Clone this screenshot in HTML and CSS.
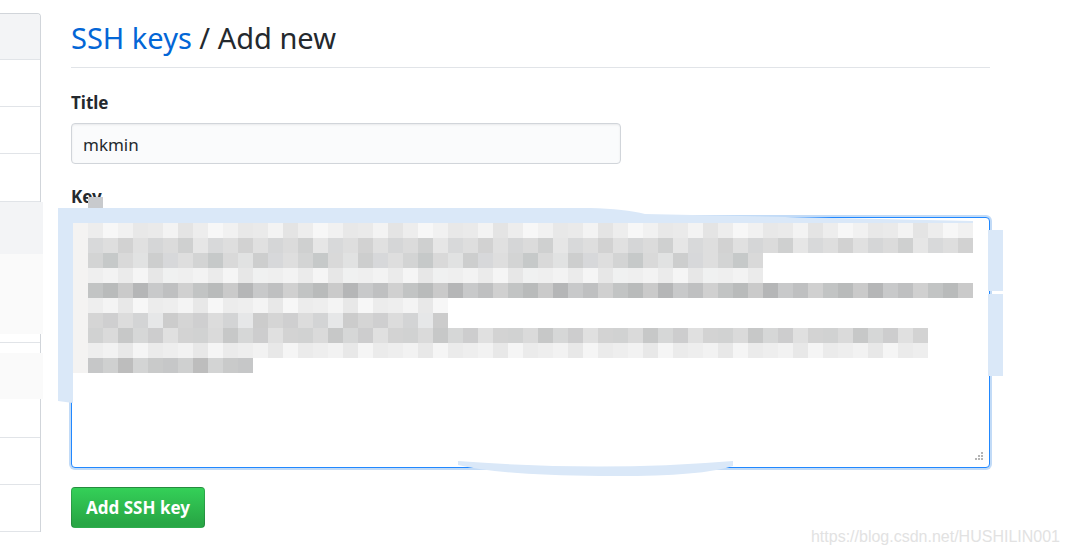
FILE: index.html
```html
<!DOCTYPE html>
<html lang="en">
<head>
<meta charset="utf-8">
<title>SSH keys / Add new</title>
<link rel="stylesheet" href="styles.css">
</head>
<body>
<div class="page">
  <aside class="menu">
    <div class="menu-item selected"></div>
    <div class="menu-item"></div>
    <div class="menu-item"></div>
    <div class="menu-item"></div>
    <div class="menu-item"></div>
    <div class="menu-item"></div>
    <div class="menu-item"></div>
    <div class="menu-item"></div>
    <div class="menu-item"></div>
    <div class="menu-item"></div>
    <div class="menu-item"></div>
  </aside>

  <main class="main">
    <h2 class="subhead"><a class="subhead-link" href="#">SSH keys</a> / Add new</h2>
    <form class="key-form">
      <div class="form-group">
        <label class="form-label" for="title">Title</label>
        <input class="form-input" id="title" type="text" value="mkmin">
      </div>
      <div class="form-group form-group-key">
        <label class="form-label">Key</label>
        <div class="key-field">
          <div class="m-row"><span class="lead"></span><span class="cells c0 w60"></span></div>
          <div class="m-row"><span class="lead"></span><span class="cells c1 w60"></span></div>
          <div class="m-row"><span class="lead"></span><span class="cells c2 w46"></span></div>
          <div class="m-row"><span class="lead"></span><span class="cells c3 w46"></span></div>
          <div class="m-row"><span class="lead"></span><span class="cells c4 w60"></span></div>
          <div class="m-row"><span class="lead"></span><span class="cells c5 w25"></span></div>
          <div class="m-row"><span class="lead"></span><span class="cells c6 w25"></span></div>
          <div class="m-row"><span class="lead"></span><span class="cells c7 w57"></span></div>
          <div class="m-row"><span class="lead"></span><span class="cells c8 w57"></span></div>
          <div class="m-row"><span class="lead"></span><span class="cells c9 w12"></span></div>
          <svg class="grip" width="12" height="12" viewBox="0 0 12 12">
            <rect x="8" y="0" width="2" height="2" fill="#b5b5b5"/>
            <rect x="5" y="3" width="2" height="2" fill="#b5b5b5"/>
            <rect x="8" y="3" width="2" height="2" fill="#b5b5b5"/>
            <rect x="2" y="6" width="2" height="2" fill="#b5b5b5"/>
            <rect x="5" y="6" width="2" height="2" fill="#b5b5b5"/>
            <rect x="8" y="6" width="2" height="2" fill="#b5b5b5"/>
          </svg>
        </div>
      </div>
      <button class="btn-primary" type="button">Add SSH key</button>
    </form>
  </main>

  <svg class="smudges" width="1068" height="555" viewBox="0 0 1068 555">
    <rect x="0" y="202" width="43" height="52" fill="#f3f4f6"/>
    <rect x="0" y="254" width="43" height="80" fill="#fafafa"/>
    <rect x="0" y="353" width="43" height="46" fill="#fafafa"/>
    <path d="M58,208 L590,208 Q625,209 645,214 L973,221 L973,223 L73,223 L73,403 L58,401 Z" fill="#dae8f8"/>
    <rect x="988" y="230" width="15" height="61" fill="#dae8f8"/>
    <rect x="988" y="294" width="15" height="82" fill="#dae8f8"/>
    <path d="M458,461 Q600,472 733,461 L733,466 Q700,477 600,476 Q500,475 458,465 Z" fill="#dae8f8"/>
    <rect x="88" y="197" width="15" height="11" fill="#c8cacd"/>
  </svg>

  <div class="watermark">https://blog.csdn.net/HUSHILIN001</div>
</div>
</body>
</html>
```

FILE: styles.css
```css
* { box-sizing: border-box; }

html, body {
  margin: 0;
  padding: 0;
  background: #fff;
}

body {
  font-family: "Noto Sans", "Open Sans", "Liberation Sans", sans-serif;
  color: #24292e;
  overflow: hidden;
}

.page {
  position: relative;
  display: flex;
  align-items: flex-start;
  width: 1068px;
  height: 555px;
  overflow: hidden;
}

/* left menu */
.menu {
  flex: 0 0 41px;
  margin-top: 13px;
  border-top: 1px solid #d1d5da;
  border-right: 1px solid #d1d5da;
  border-top-right-radius: 4px;
  display: flex;
  flex-direction: column;
}

.menu-item {
  height: 47.2px;
  border-bottom: 1px solid #e1e4e8;
}

.menu-item.selected {
  height: 46px;
  background: #f3f4f6;
  border-top-right-radius: 3px;
}

/* main */
.main {
  flex: 0 0 919px;
  margin-left: 30px;
}

.subhead {
  margin: 18px 0 0;
  padding-bottom: 9px;
  font-size: 29px;
  line-height: 40px;
  font-weight: 400;
  color: #24292e;
  border-bottom: 1px solid #e1e4e8;
}

.subhead-link {
  color: #0366d6;
  text-decoration: none;
}

.key-form {
  display: flex;
  flex-direction: column;
  align-items: flex-start;
}

.form-group {
  display: flex;
  flex-direction: column;
  align-items: flex-start;
  margin-top: 24px;
}

.form-group-key {
  margin-top: 22px;
}

.form-label {
  font-size: 17px;
  line-height: 22px;
  font-weight: 700;
  margin-bottom: 9px;
}

.form-input {
  width: 550px;
  height: 41px;
  padding: 1px 11px 0;
  font-family: inherit;
  font-size: 17px;
  color: #24292e;
  background: #fafbfc;
  border: 1px solid #d1d5da;
  border-radius: 4px;
  box-shadow: inset 0 1px 2px rgba(27, 31, 35, 0.075);
  outline: none;
}

.key-field {
  position: relative;
  width: 919px;
  height: 251px;
  padding: 5px 0 0 1px;
  border: 1px solid #2188ff;
  border-radius: 4px;
  background: #fff;
  box-shadow: 0 0 0 2px #c2dbf7;
}

.m-row {
  display: flex;
  height: 15px;
}

.m-row .lead {
  width: 15px;
  background: #f4f3f2;
}

.cells { display: block; height: 15px; }
.w60 { width: 885px; }
.w57 { width: 840px; }
.w46 { width: 675px; }
.w25 { width: 360px; }
.w12 { width: 165px; }

.c0 { background: repeating-linear-gradient(90deg, #ededed 0 15px, #f7f7f7 15px 30px, #f1f1f1 30px 45px, #e8e8e8 45px 60px, #eaeaea 60px 75px, #f3f3f3 75px 90px, #e4e4e4 90px 105px); }
.c1 { background: repeating-linear-gradient(90deg, #d8d9da 0 15px, #dedede 15px 30px, #d2d2d2 30px 45px, #e0e0e0 45px 60px, #d5d6d7 60px 75px, #dbdbdb 75px 90px, #cfd0d0 90px 105px, #e6e6e6 105px 120px); }
.c2 { background: repeating-linear-gradient(90deg, #d3d4d4 0 15px, #c6c9c9 15px 30px, #d9d9d9 30px 45px, #e1e2e2 45px 60px, #cdcece 60px 75px, #d7d8da 75px 90px, #dedede 90px 105px); }
.c3 { background: repeating-linear-gradient(90deg, #efefef 0 15px, #f3f3f3 15px 30px, #ebebeb 30px 45px, #f5f5f5 45px 60px, #e7e7e7 60px 75px, #f0f1f1 75px 90px); }
.c4 { background: repeating-linear-gradient(90deg, #c2c4c4 0 15px, #b9bbbb 15px 30px, #cacaca 30px 45px, #b5b6b7 45px 60px, #c8c9ca 60px 75px, #bfc0c1 75px 90px, #d0d0d0 90px 105px); }
.c5 { background: repeating-linear-gradient(90deg, #eeeeee 0 15px, #f4f4f4 15px 30px, #e8e8e8 30px 45px, #f7f7f7 45px 60px, #ececec 60px 75px); }
.c6 { background: repeating-linear-gradient(90deg, #d5d5d5 0 15px, #cfcfd0 15px 30px, #dcdcdc 30px 45px, #d3d4d5 45px 60px, #e6e7e8 60px 75px, #cccccc 75px 90px); }
.c7 { background: repeating-linear-gradient(90deg, #d1d2d2 0 15px, #dadada 15px 30px, #c7c8c8 30px 45px, #d6d7d7 45px 60px, #cdcdce 60px 75px, #e0e0e0 75px 90px, #d3d3d3 90px 105px); }
.c8 { background: repeating-linear-gradient(90deg, #eeeeee 0 15px, #f2f2f2 15px 30px, #e8e8e8 30px 45px, #f5f5f5 45px 60px, #ebebeb 60px 75px); }
.c9 { background: repeating-linear-gradient(90deg, #c6c7c8 0 15px, #cfd0d0 15px 30px, #bdbdbd 30px 45px, #d3d4d4 45px 60px, #c9caca 60px 75px); }

.grip {
  position: absolute;
  right: 4px;
  bottom: 3px;
}

.btn-primary {
  margin-top: 19px;
  width: 134px;
  height: 41px;
  padding: 0;
  font-family: inherit;
  font-size: 17px;
  font-weight: 700;
  color: #fff;
  background: linear-gradient(180deg, #34d058 0%, #28a745 90%);
  border: 1px solid rgba(27, 31, 35, 0.2);
  border-radius: 4px;
  cursor: pointer;
}

.smudges {
  position: absolute;
  left: 0;
  top: 0;
  pointer-events: none;
}

.watermark {
  position: absolute;
  right: 8px;
  bottom: 8px;
  font-family: "Liberation Sans", Arial, sans-serif;
  font-size: 16px;
  line-height: 20px;
  color: #e2e2e2;
}
```
